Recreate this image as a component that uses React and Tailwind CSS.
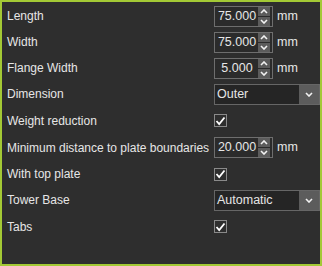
import React from "react";

const font = { fontFamily: '"Liberation Sans", Arial, sans-serif' };

function Chevron({ up }) {
  return (
    <svg width="8" height="5" viewBox="0 0 8 5" className="block">
      <path
        d={up ? "M1 4 L4 1 L7 4" : "M1 1 L4 4 L7 1"}
        fill="none"
        stroke="#f2f2f2"
        strokeWidth="1.6"
      />
    </svg>
  );
}

function NumberField({ value }) {
  return (
    <div className="flex items-center">
      <div className="flex items-center w-[59px] h-[21px] border border-[#6e6e6e] bg-[#2b2b2b]">
        <span className="flex-1 text-center text-[12.5px] text-[#e6e6e6] leading-none pl-[1px]">
          {value}
        </span>
        <div className="flex flex-col gap-[1px] mr-[2px]">
          <div className="w-[12px] h-[9px] bg-[#5c5c5c] flex items-center justify-center">
            <Chevron up />
          </div>
          <div className="w-[12px] h-[9px] bg-[#5c5c5c] flex items-center justify-center">
            <Chevron />
          </div>
        </div>
      </div>
      <span className="ml-[4px] text-[12.5px] text-[#e6e6e6]">mm</span>
    </div>
  );
}

function Select({ value }) {
  return (
    <div className="flex w-[106px] h-[21px] border border-[#666] bg-[#252525]">
      <span className="flex-1 flex items-center pl-[2px] text-[12.5px] text-[#e6e6e6]">
        {value}
      </span>
      <div className="w-[20px] bg-[#5c5c5c] flex items-center justify-center">
        <Chevron />
      </div>
    </div>
  );
}

function Check() {
  return (
    <div className="w-[13px] h-[13px] border border-[#8a8a8a] flex items-center justify-center">
      <svg width="11" height="10" viewBox="0 0 11 10">
        <path d="M1.5 5 L4.2 8 L9.5 1.5" fill="none" stroke="#ffffff" strokeWidth="1.8" />
      </svg>
    </div>
  );
}

const rows = [
  { label: "Length", h: "h-[26px]", ctrl: <NumberField value="75.000" /> },
  { label: "Width", h: "h-[26px]", ctrl: <NumberField value="75.000" /> },
  { label: "Flange Width", h: "h-[26px]", ctrl: <NumberField value="5.000" /> },
  { label: "Dimension", h: "h-[26px]", ctrl: <Select value="Outer" /> },
  { label: "Weight reduction", h: "h-[27px]", ctrl: <Check /> },
  { label: "Minimum distance to plate boundaries", h: "h-[27px]", ctrl: <NumberField value="20.000" /> },
  { label: "With top plate", h: "h-[26px]", ctrl: <Check /> },
  { label: "Tower Base", h: "h-[26px]", ctrl: <Select value="Automatic" /> },
  { label: "Tabs", h: "h-[27px]", ctrl: <Check /> },
];

export default function App() {
  return (
    <div
      className="w-[322px] h-[266px] bg-[#2e2e2e] border-2 border-[#a3c935] pt-[1px] pl-[5px] text-[12px] text-[#e6e6e6]"
      style={font}
    >
      {rows.map((r) => (
        <div key={r.label} className={`flex items-center ${r.h}`}>
          <span className="w-[207px] whitespace-nowrap text-[12px]">{r.label}</span>
          {r.ctrl}
        </div>
      ))}
    </div>
  );
}
